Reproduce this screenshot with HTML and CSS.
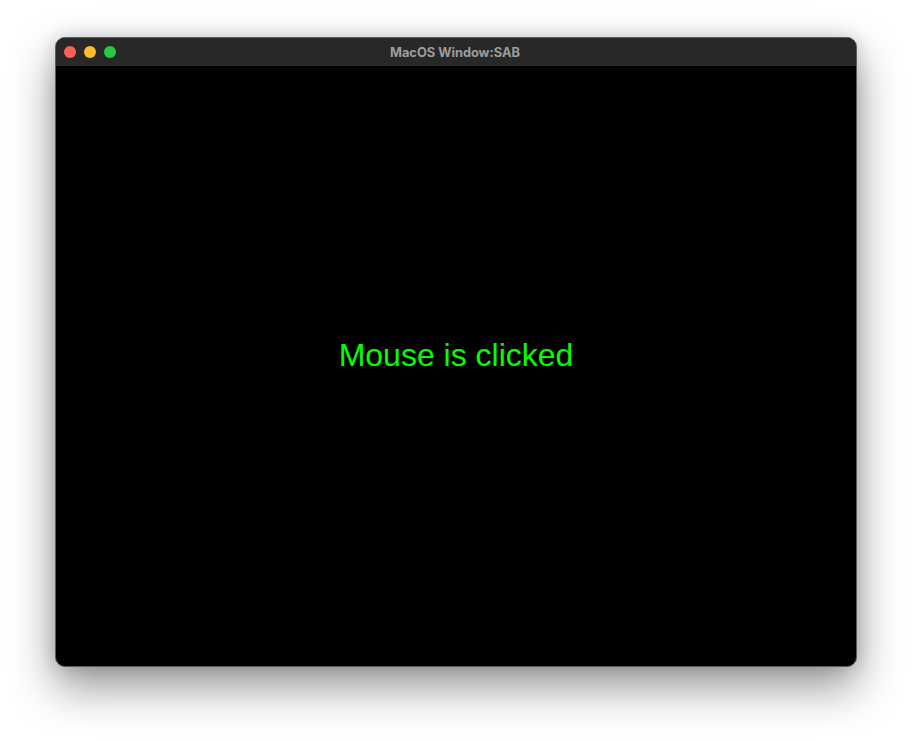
FILE: index.html
```html
<!DOCTYPE html>
<html>
<head>
<meta charset="utf-8">
<link rel="stylesheet" href="styles.css">
</head>
<body>
<div class="stage">
  <div class="window">
    <div class="titlebar">
      <div class="lights">
        <span class="light red"></span>
        <span class="light yellow"></span>
        <span class="light green"></span>
      </div>
      <div class="title">MacOS Window:SAB</div>
    </div>
    <div class="content">
      <div class="message">Mouse is clicked</div>
    </div>
  </div>
</div>
</body>
</html>
```

FILE: styles.css
```css
html, body {
  margin: 0;
  padding: 0;
  background: #ffffff;
  width: 912px;
  height: 740px;
  overflow: hidden;
}
.stage {
  padding: 37px 0 0 55px;
}
.window {
  width: 800px;
  border: 1px solid #5c5c5c;
  border-radius: 10px;
  overflow: hidden;
  background: #000;
  box-shadow: 0 20px 45px rgba(0, 0, 0, 0.42), 0 0 18px rgba(0, 0, 0, 0.16);
}
.titlebar {
  height: 28px;
  background: #282828;
  position: relative;
  display: flex;
  align-items: center;
  justify-content: center;
}
.lights {
  position: absolute;
  left: 8px;
  top: 8px;
  display: flex;
  gap: 8px;
}
.light {
  width: 12px;
  height: 12px;
  border-radius: 50%;
  display: block;
}
.red { background: #fe5f57; }
.yellow { background: #febc2e; }
.green { background: #28c840; }
.title {
  font-family: "Inter", "Liberation Sans", sans-serif;
  font-weight: 700;
  font-size: 12.8px;
  color: #9d9d9d;
  margin-right: 2px;
}
.content {
  height: 600px;
  display: flex;
  align-items: center;
  justify-content: center;
}
.message {
  font-family: "Liberation Sans", Arial, sans-serif;
  font-size: 32px;
  color: #00ff00;
  margin-bottom: 22px;
}
```
